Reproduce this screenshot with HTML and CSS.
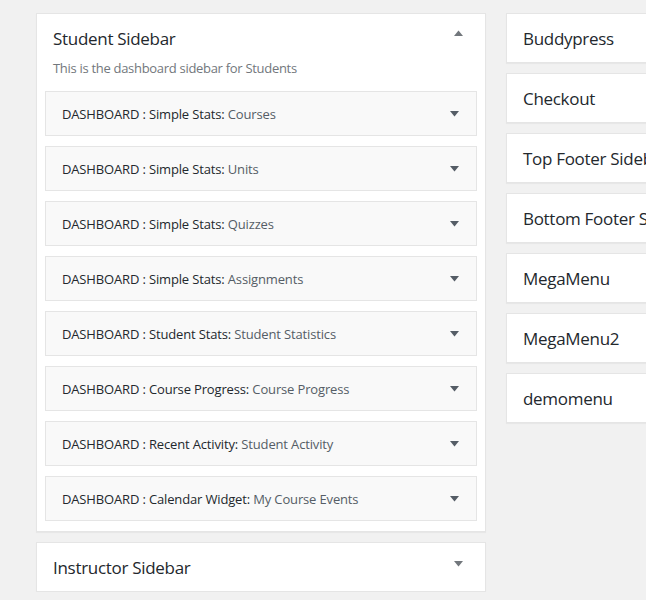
FILE: index.html
```html
<!DOCTYPE html>
<html>
<head>
<meta charset="utf-8">
<link rel="stylesheet" href="styles.css">
</head>
<body>
<div class="widgets">
  <div class="col-left">
    <section class="sidebar open">
      <div class="sidebar-head">
        <h2 class="sidebar-title">Student Sidebar</h2>
        <span class="toggle toggle-up"><svg width="9" height="6" viewBox="0 0 9 6"><path d="M0 6 L4.5 0.5 L9 6 Z" fill="#72777c"/></svg></span>
      </div>
      <p class="sidebar-desc">This is the dashboard sidebar for Students</p>
      <ul class="widget-list">
        <li class="widget"><span class="widget-name">DASHBOARD : Simple Stats: <span class="in-title">Courses</span></span><svg class="arrow" width="9" height="6" viewBox="0 0 9 6"><path d="M0 0 L9 0 L4.5 5.5 Z" fill="#555d66"/></svg></li>
        <li class="widget"><span class="widget-name">DASHBOARD : Simple Stats: <span class="in-title">Units</span></span><svg class="arrow" width="9" height="6" viewBox="0 0 9 6"><path d="M0 0 L9 0 L4.5 5.5 Z" fill="#555d66"/></svg></li>
        <li class="widget"><span class="widget-name">DASHBOARD : Simple Stats: <span class="in-title">Quizzes</span></span><svg class="arrow" width="9" height="6" viewBox="0 0 9 6"><path d="M0 0 L9 0 L4.5 5.5 Z" fill="#555d66"/></svg></li>
        <li class="widget"><span class="widget-name">DASHBOARD : Simple Stats: <span class="in-title">Assignments</span></span><svg class="arrow" width="9" height="6" viewBox="0 0 9 6"><path d="M0 0 L9 0 L4.5 5.5 Z" fill="#555d66"/></svg></li>
        <li class="widget"><span class="widget-name">DASHBOARD : Student Stats: <span class="in-title">Student Statistics</span></span><svg class="arrow" width="9" height="6" viewBox="0 0 9 6"><path d="M0 0 L9 0 L4.5 5.5 Z" fill="#555d66"/></svg></li>
        <li class="widget"><span class="widget-name">DASHBOARD : Course Progress: <span class="in-title">Course Progress</span></span><svg class="arrow" width="9" height="6" viewBox="0 0 9 6"><path d="M0 0 L9 0 L4.5 5.5 Z" fill="#555d66"/></svg></li>
        <li class="widget"><span class="widget-name">DASHBOARD : Recent Activity: <span class="in-title">Student Activity</span></span><svg class="arrow" width="9" height="6" viewBox="0 0 9 6"><path d="M0 0 L9 0 L4.5 5.5 Z" fill="#555d66"/></svg></li>
        <li class="widget"><span class="widget-name">DASHBOARD : Calendar Widget: <span class="in-title">My Course Events</span></span><svg class="arrow" width="9" height="6" viewBox="0 0 9 6"><path d="M0 0 L9 0 L4.5 5.5 Z" fill="#555d66"/></svg></li>
      </ul>
    </section>
    <section class="sidebar">
      <div class="sidebar-head">
        <h2 class="sidebar-title">Instructor Sidebar</h2>
        <span class="toggle toggle-down"><svg width="9" height="6" viewBox="0 0 9 6"><path d="M0 0 L9 0 L4.5 5.5 Z" fill="#72777c"/></svg></span>
      </div>
    </section>
  </div>
  <div class="col-right">
    <section class="sidebar"><div class="sidebar-head"><h2 class="sidebar-title">Buddypress</h2></div></section>
    <section class="sidebar"><div class="sidebar-head"><h2 class="sidebar-title">Checkout</h2></div></section>
    <section class="sidebar"><div class="sidebar-head"><h2 class="sidebar-title">Top Footer Sidebar</h2></div></section>
    <section class="sidebar"><div class="sidebar-head"><h2 class="sidebar-title">Bottom Footer Sidebar</h2></div></section>
    <section class="sidebar"><div class="sidebar-head"><h2 class="sidebar-title">MegaMenu</h2></div></section>
    <section class="sidebar"><div class="sidebar-head"><h2 class="sidebar-title">MegaMenu2</h2></div></section>
    <section class="sidebar"><div class="sidebar-head"><h2 class="sidebar-title">demomenu</h2></div></section>
  </div>
</div>
</body>
</html>
```

FILE: styles.css
```css
html, body {
  margin: 0;
  padding: 0;
  background: #f1f1f1;
  overflow: hidden;
}
body {
  font-family: "Open Sans", "Noto Sans", sans-serif;
  color: #23282d;
}
.widgets {
  display: flex;
  gap: 20px;
  padding: 13px 0 0 36px;
  width: 800px;
}
.col-left {
  width: 450px;
  flex: none;
  display: flex;
  flex-direction: column;
  gap: 10px;
}
.col-right {
  width: 300px;
  flex: none;
  display: flex;
  flex-direction: column;
  gap: 10px;
}
.sidebar {
  background: #fff;
  border: 1px solid #e5e5e5;
  box-shadow: 0 1px 1px rgba(0,0,0,0.04);
}
.sidebar-head {
  display: flex;
  align-items: flex-start;
}
.sidebar-title {
  flex: 1;
  margin: 0;
  padding: 14px 16px 12px;
  font-size: 17px;
  line-height: 22px;
  font-weight: 400;
  letter-spacing: -0.3px;
  white-space: nowrap;
  color: #23282d;
}
.open .sidebar-title {
  padding-bottom: 0;
}
.toggle {
  display: flex;
  padding-right: 22px;
}
.toggle-up { padding-top: 16px; }
.toggle-down { padding-top: 18px; }
.sidebar-desc {
  margin: 8px 16px 13px;
  font-size: 13px;
  line-height: 20px;
  letter-spacing: -0.3px;
  color: #72777c;
}
.widget-list {
  list-style: none;
  margin: 0;
  padding: 0 8px 10px;
  display: flex;
  flex-direction: column;
  gap: 10px;
}
.widget {
  display: flex;
  align-items: center;
  height: 43px;
  padding: 0 17px 0 16px;
  background: #f9f9f9;
  border: 1px solid #e5e5e5;
  font-size: 13px;
  letter-spacing: -0.15px;
  color: #23282d;
}
.widget-name {
  flex: 1;
}
.in-title {
  color: #555d66;
}
.arrow {
  flex: none;
}
```
